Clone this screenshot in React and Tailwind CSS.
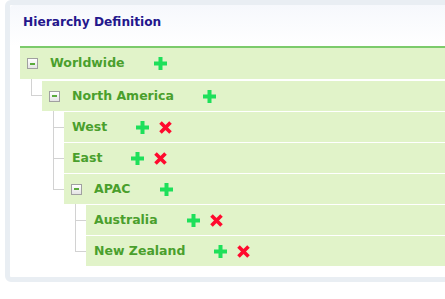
import React from "react";

const tree = {
  name: "Worldwide",
  root: true,
  children: [
    {
      name: "North America",
      children: [
        { name: "West", remove: true },
        { name: "East", remove: true },
        {
          name: "APAC",
          children: [
            { name: "Australia", remove: true },
            { name: "New Zealand", remove: true },
          ],
        },
      ],
    },
  ],
};

const PlusIcon = () => (
  <svg width="13" height="13" viewBox="0 0 13 13" className="shrink-0">
    <path d="M4.5 0h4v4.5H13v4H8.5V13h-4V8.5H0v-4h4.5z" fill="#1ee05a" />
  </svg>
);

const CrossIcon = () => (
  <svg width="13" height="13" viewBox="0 0 13 13" className="shrink-0">
    <path d="M1.5 1.5l10 10M11.5 1.5l-10 10" stroke="#ff0a2e" strokeWidth="3.6" />
  </svg>
);

const CollapseBox = () => (
  <span className="flex h-[11px] w-[11px] shrink-0 items-center justify-center border border-[#a0a0a0] bg-gradient-to-b from-white to-[#e4e4e4]">
    <span className="h-[2px] w-[5px] bg-[#5aab3c]" />
  </span>
);

const Row = ({ node, first }) => {
  const parent = node.children && node.children.length > 0;
  return (
    <div
      className={`flex items-center bg-[#e1f3c9] ${first ? "h-[31px]" : "h-[30px]"} ${
        parent ? "pl-[7px]" : "pl-[8px]"
      }`}
    >
      {parent && <CollapseBox />}
      <span className={`font-bold text-[#4a9f2d] ${parent ? "ml-[12px]" : ""}`}>{node.name}</span>
      <span className="ml-[29px] flex items-center gap-[10px]">
        <PlusIcon />
        {node.remove && <CrossIcon />}
      </span>
    </div>
  );
};

const Branch = ({ node, last, gap }) => (
  <li className={`relative pl-[11px] ${gap}`}>
    {!last && <span className="absolute left-0 top-0 bottom-0 border-l border-[#d2d2d2]" />}
    <span className="absolute left-0 top-0 h-[17px] w-[11px] border-l border-b border-[#d2d2d2]" />
    <Row node={node} />
    {node.children && <Children nodes={node.children} />}
  </li>
);

const Children = ({ nodes, gap = "pt-px" }) => (
  <ul className="ml-[11px]">
    {nodes.map((n, i) => (
      <Branch key={n.name} node={n} last={i === nodes.length - 1} gap={gap} />
    ))}
  </ul>
);

export default function App() {
  return (
    <div className="h-[299px] w-[445px] overflow-hidden bg-white" style={{ fontFamily: "'DejaVu Sans', Verdana, sans-serif" }}>
      <div className="ml-[5px] w-[470px] rounded-[6px] border-[5px] border-[#e9eef3]">
        <div className="rounded-t-[4px] bg-gradient-to-b from-[#f6f8fc] to-white px-[13px] pb-[14px] pt-[8px]">
          <h2 className="text-[12.2px] font-bold leading-[19px] text-[#24168c]">Hierarchy Definition</h2>
        </div>
        <div className="pb-[11px] pl-[10px] text-[12.5px]">
          <ul className="border-t-2 border-[#7ccb6b]">
            <li>
              <Row node={tree} first />
              <ul className="ml-[11px]">
                <Branch node={tree.children[0]} last gap="pt-[2px]" />
              </ul>
            </li>
          </ul>
        </div>
      </div>
    </div>
  );
}
